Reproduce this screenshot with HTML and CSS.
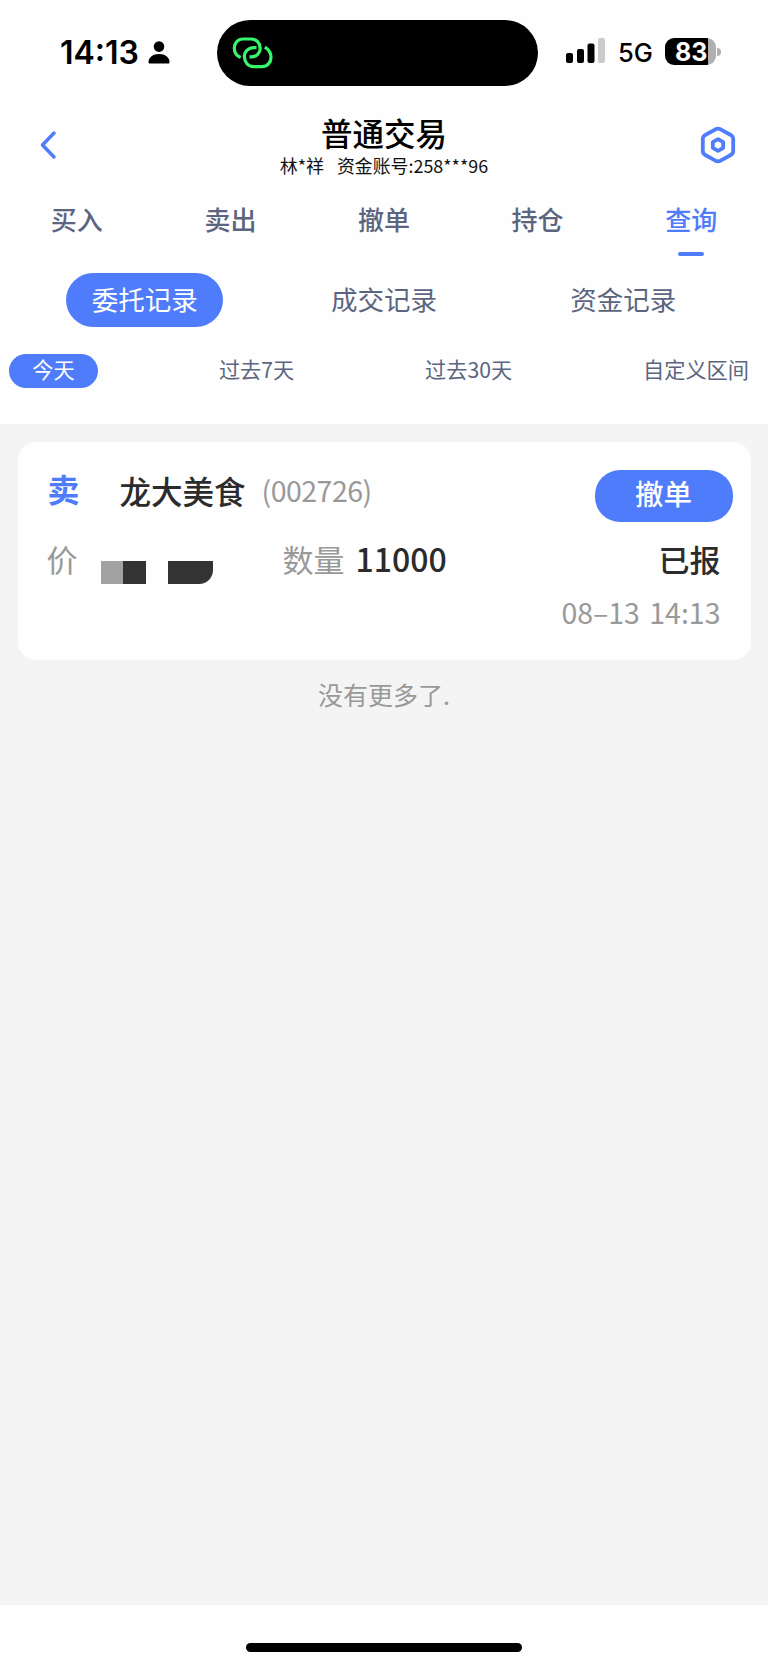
FILE: index.html
```html
<!DOCTYPE html>
<html lang="zh-CN">
<head>
    <meta charset="UTF-8">
    <meta name="viewport" content="width=device-width, initial-scale=1.0">
    <title>普通交易</title>
    <link rel="stylesheet" href="styles.css">
</head>
<body>
    <div class="status-bar">
        <div class="status-time">
            <span class="clock">14:13</span>
            <svg class="person" width="22" height="23" viewBox="0 0 22 23">
                <circle cx="11" cy="5.6" r="5.3"/>
                <path d="M0.5 21C0.5 16.5 5 13 11 13s10.500 3.500 10.500 8c0 1-.5 1.500-1.500 1.500H2C1 22.500 .5 22 .5 21z"/>
            </svg>
        </div>
        <div class="island">
            <svg width="42" height="34" viewBox="0 0 42 34" fill="none" stroke="#35f76b" stroke-width="3.200">
                <path d="M8.600 21.500C4.600 19.800 2.300 16 2.300 12C2.300 6.700 6 3 11 3H19C24.500 3 28.200 7.200 28.200 12.200C28.200 17.200 24.500 20.800 19.500 20.800H17.500"/>
                <path d="M24.500 11.600H22C16.500 11.600 12.400 15.500 12.400 20.500C12.400 26.300 16 30.700 21.500 30.700H30C35.300 30.700 39 26.500 39 21.500C39 17 36.800 13.500 32.800 11.200"/>
            </svg>
        </div>
        <div class="status-right">
            <svg class="signal" width="40" height="26" viewBox="0 0 40 26">
                <rect x="0" y="15" width="7" height="10" rx="2"/>
                <rect x="11" y="11" width="7" height="14" rx="2"/>
                <rect x="21.500" y="5.500" width="7" height="19.500" rx="2"/>
                <rect x="32" y="0" width="7" height="25" rx="2" fill="#cbcbcb"/>
            </svg>
            <span class="network">5G</span>
            <div class="battery"><span>83</span></div>
            <i class="battery-nub"></i>
        </div>
    </div>

    <header class="header">
        <svg class="back" width="18" height="30" viewBox="0 0 18 30" fill="none" stroke="#4f7cfb" stroke-width="3.500" stroke-linecap="round" stroke-linejoin="round">
            <path d="M15 3L3.500 15l11.500 12"/>
        </svg>
        <div class="header-title">
            <h1>普通交易</h1>
            <p><span>林*祥</span><span>资金账号:258***96</span></p>
        </div>
        <svg class="settings" width="36" height="38" viewBox="0 0 36 38" fill="none" stroke="#4f7cfb" stroke-width="3.800" stroke-linejoin="round">
            <path d="M15.500 3.300Q18 2.100 20.500 3.300L30.800 9Q33.200 10.500 33.200 13V25Q33.200 27.500 30.800 29L20.500 34.700Q18 35.900 15.500 34.700L5.200 29Q2.800 27.500 2.800 25V13Q2.800 10.500 5.200 9Z"/>
            <path d="M18 13.200L23.200 16.200V21.800L18 24.800L12.800 21.800V16.200Z"/>
        </svg>
    </header>

    <nav class="tabs">
        <a>买入</a>
        <a>卖出</a>
        <a>撤单</a>
        <a>持仓</a>
        <a class="active">查询</a>
    </nav>

    <div class="sub-tabs">
        <a class="active">委托记录</a>
        <a>成交记录</a>
        <a>资金记录</a>
    </div>

    <div class="ranges">
        <a class="active">今天</a>
        <a>过去7天</a>
        <a>过去30天</a>
        <a>自定义区间</a>
    </div>

    <main class="list">
        <div class="card">
            <div class="row row-head">
                <span class="side">卖</span>
                <span class="name">龙大美食</span>
                <span class="code">(002726)</span>
                <button class="cancel">撤单</button>
            </div>
            <div class="row row-detail">
                <span class="label">价</span>
                <!-- hidden price -->
                <div class="mask">
                    <i class="mask-light"></i><i class="mask-dark"></i>
                    <i class="mask-dark mask-second"></i><i class="mask-dark mask-end"></i>
                </div>
                <span class="label">数量</span>
                <span class="amount">11000</span>
                <span class="state">已报</span>
            </div>
            <div class="date">08–13 14:13</div>
        </div>
        <p class="no-more">没有更多了.</p>
    </main>

    <footer class="home-bar"><i></i></footer>
</body>
</html>
```

FILE: styles.css
```css
* {
    box-sizing: border-box;
}
body {
    margin: 0;
    height: 1666px;
    display: flex;
    flex-direction: column;
    background: #fefefe;
    color: #111;
    font-family: "Noto Sans CJK SC", sans-serif;
}
h1, p {
    margin: 0;
}
svg {
    display: block;
    flex: none;
}

/* status bar */
.status-bar {
    height: 106px;
    padding-top: 20px;
    display: flex;
    font-family: Inter, sans-serif;
    color: #000;
}
.status-time {
    width: 216.500px;
    height: 65px;
    padding-left: 60px;
    display: flex;
    align-items: center;
}
.clock {
    width: 88px;
    font-size: 32px;
    font-weight: 600;
    line-height: 65px;
    white-space: nowrap;
}
.island {
    width: 321.500px;
    height: 66px;
    padding: 16px 15px;
    border-radius: 33px;
    background: #000;
}
.status-right {
    height: 58px;
    padding-left: 28px;
    display: flex;
    align-items: center;
}
.network {
    width: 47px;
    margin-left: 12px;
    padding-top: 8px;
    font-size: 25.500px;
    font-weight: 500;
    line-height: 58px;
}
.battery {
    width: 51px;
    height: 27px;
    border-radius: 9px;
    background: linear-gradient(to right, #000 43px, #b0b0b0 43px);
    color: #fff;
    font-size: 25px;
    font-weight: 700;
    line-height: 28px;
    padding-left: 10px;
    margin-top: 5px;
}
.battery-nub {
    width: 4px;
    height: 8px;
    margin: 5px 0 0 1px;
    border-radius: 0 4px 4px 0;
    background: #b0b0b0;
}
.signal {
    margin-top: 4px;
}

/* header */
.header {
    height: 84px;
    padding: 0 32px 0 39px;
    display: flex;
    justify-content: space-between;
}
.back {
    margin-top: 24px;
}
.settings {
    margin-top: 20px;
}
.header-title {
    padding: 5px 0 0 11px;
    text-align: center;
}
.header-title h1 {
    font-size: 31.500px;
    font-weight: 500;
    line-height: 42px;
    color: #000;
}
.header-title p {
    display: flex;
    justify-content: center;
    gap: 13px;
    margin-top: 1px;
    font-size: 17.900px;
    line-height: 22px;
    white-space: nowrap;
}

/* tabs */
.tabs {
    height: 71px;
    display: grid;
    grid-template-columns: repeat(5, 1fr);
    color: #5b6580;
    font-size: 26px;
    font-weight: 500;
    line-height: 58px;
}
.tabs a {
    display: flex;
    flex-direction: column;
    align-items: center;
}
.tabs .active {
    color: #4f7cfb;
}
.tabs .active::after {
    content: "";
    width: 26px;
    height: 4px;
    margin-top: 4px;
    border-radius: 2px;
    background: #4f7cfb;
}
.sub-tabs {
    padding: 12px 25px 0;
    height: 92px;
    display: grid;
    grid-template-columns: repeat(3, 1fr);
    justify-items: center;
    color: #5b6580;
    font-size: 26.500px;
    line-height: 52px;
}
.sub-tabs a {
    width: 157px;
    height: 54px;
    border-radius: 27px;
    text-align: center;
}
.sub-tabs .active, .ranges .active {
    background: #4f7cfb;
    color: #fff;
}
.ranges {
    height: 71px;
    padding: 1px 19px 0 9px;
    display: flex;
    justify-content: space-between;
    color: #5b6580;
    font-size: 21.200px;
    line-height: 30px;
}
.ranges a {
    height: 34px;
}
.ranges .active {
    width: 89px;
    margin-right: -10px;
    border-radius: 17px;
    text-align: center;
}

/* records */
.list {
    flex: 1;
    padding: 17.500px 17.500px 0;
    background: #f4f4f4;
}
.card {
    height: 218px;
    border-radius: 18px;
    background: #fefefe;
}
.row {
    display: flex;
    white-space: nowrap;
}
.row-head {
    height: 86px;
    padding: 28px 18px 0 30px;
}
.side {
    width: 72px;
    color: #4f7cfb;
    font-size: 32px;
    font-weight: 700;
    line-height: 36px;
}
.name {
    color: #2b2b2b;
    font-size: 31.500px;
    font-weight: 500;
    line-height: 40px;
}
.code {
    margin-left: 16px;
    color: #999;
    font-size: 28.500px;
    line-height: 40px;
    letter-spacing: -0.5px;
}
.cancel {
    width: 138px;
    height: 52px;
    margin-left: auto;
    padding: 0 0 6px;
    border: none;
    border-radius: 25px;
    background: #4f7cfb;
    color: #fff;
    font-family: inherit;
    font-size: 28.500px;
    font-weight: 500;
}
.row-detail {
    height: 66px;
    padding: 10px 30px 0 29px;
    font-size: 31px;
    line-height: 41px;
    color: #2b2b2b;
}
.label {
    color: #999;
}
.mask {
    width: 205px;
    padding: 23px 0 0 23px;
    display: flex;
}
.mask i {
    width: 22.500px;
    height: 23px;
}
.mask-light {
    background: #a2a2a2;
}
.mask-dark {
    background: #333;
}
.mask-second {
    margin-left: 22px;
}
.mask-end {
    border-bottom-right-radius: 14px;
}
.amount {
    margin-left: 11px;
    font-size: 32px;
    font-weight: 500;
    line-height: 40px;
}
.state {
    margin-left: auto;
    font-weight: 500;
}
.date {
    padding-right: 30px;
    color: #999;
    font-size: 28.500px;
    line-height: 36px;
    word-spacing: 3px;
    text-align: right;
}
.no-more {
    margin-top: 17px;
    color: #999;
    font-size: 25px;
    line-height: 35px;
    text-align: center;
}

.home-bar {
    height: 61px;
    padding-top: 38px;
}
.home-bar i {
    display: block;
    width: 276px;
    height: 9px;
    margin: 0 auto;
    border-radius: 5px;
    background: #000;
}
```
